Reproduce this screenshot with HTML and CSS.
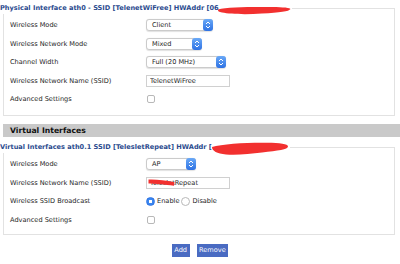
FILE: index.html
```html
<!DOCTYPE html>
<html>
<head>
<meta charset="utf-8">
<link rel="stylesheet" href="styles.css">
</head>
<body>
<fieldset class="group">
  <legend class="group-title">Physical Interface ath0 - SSID [TelenetWiFree] HWAddr [06<svg class="redact redact-a" width="72" height="6" viewBox="0 0 72 6"><path d="M0 4.5 C 8 2.2, 30 2, 50 2.1 C 62 2.2, 70 2.4, 72.5 4 C 71 6.5, 62 7.6, 44 8.6 C 28 9.6, 12 9.2, 4 7.6 C 1 7, -0.5 6, 0 4.5 Z"/></svg></legend>
  <div class="row">
    <span class="label">Wireless Mode</span>
    <div class="select w-client"><span class="select-value">Client</span><span class="stepper"><svg width="10" height="12" viewBox="0 0 10 12"><path d="M3 5 L5 3 L7 5 M3 7 L5 9 L7 7"/></svg></span></div>
  </div>
  <div class="row">
    <span class="label">Wireless Network Mode</span>
    <div class="select w-mixed"><span class="select-value">Mixed</span><span class="stepper"><svg width="10" height="12" viewBox="0 0 10 12"><path d="M3 5 L5 3 L7 5 M3 7 L5 9 L7 7"/></svg></span></div>
  </div>
  <div class="row">
    <span class="label">Channel Width</span>
    <div class="select w-channel"><span class="select-value">Full (20 MHz)</span><span class="stepper"><svg width="10" height="12" viewBox="0 0 10 12"><path d="M3 5 L5 3 L7 5 M3 7 L5 9 L7 7"/></svg></span></div>
  </div>
  <div class="row">
    <span class="label">Wireless Network Name (SSID)</span>
    <input class="text-input" type="text" value="TelenetWiFree">
  </div>
  <div class="row">
    <span class="label">Advanced Settings</span>
    <input class="checkbox" type="checkbox">
  </div>
</fieldset>

<div class="section-bar">Virtual Interfaces</div>

<fieldset class="group group-virtual">
  <legend class="group-title">Virtual Interfaces ath0.1 SSID [TelesletRepeat] HWAddr [<svg class="redact redact-b" width="76" height="6" viewBox="0 0 76 6"><path d="M0 3 C 10 0, 35 -1.5, 55 -1.2 C 68 -1, 76 0, 76 2.5 C 76 5.5, 66 6.5, 50 8.5 C 38 10, 24 11.5, 14 10.5 C 5 9.5, 0 7, 0 3 Z"/></svg></legend>
  <div class="row">
    <span class="label">Wireless Mode</span>
    <div class="select w-ap"><span class="select-value">AP</span><span class="stepper"><svg width="10" height="12" viewBox="0 0 10 12"><path d="M3 5 L5 3 L7 5 M3 7 L5 9 L7 7"/></svg></span></div>
  </div>
  <div class="row">
    <span class="label">Wireless Network Name (SSID)</span>
    <span class="input-wrap">
      <input class="text-input" type="text" value="TelesletRepeat">
      <svg class="redact-input" width="27" height="7" viewBox="0 0 27 7"><path d="M0.5 0.6 C 7 0.2, 17 1.2, 26.5 3.2 L 26 6.8 C 17 5.6, 7 4.8, 0.5 4.6 Z"/></svg>
    </span>
  </div>
  <div class="row">
    <span class="label">Wireless SSID Broadcast</span>
    <input class="radio" type="radio" name="bc" checked><span class="radio-label">Enable</span>
    <input class="radio" type="radio" name="bc"><span class="radio-label">Disable</span>
  </div>
  <div class="row">
    <span class="label">Advanced Settings</span>
    <input class="checkbox" type="checkbox">
  </div>
</fieldset>

<div class="actions">
  <button class="btn" type="button">Add</button>
  <button class="btn" type="button">Remove</button>
</div>
</body>
</html>
```

FILE: styles.css
```css
* { box-sizing: border-box; }

html, body {
  margin: 0;
  background: #fff;
}

body {
  width: 400px;
  height: 264px;
  overflow: hidden;
  font-family: "DejaVu Sans", sans-serif;
  font-size: 6.6px;
  color: #1e1e1e;
}

.group {
  margin: 2px 5px 0 3px;
  padding: 2px 0 6px 0;
  border: 1px solid #e2e2e2;
  min-width: 0;
}

.group-virtual {
  margin-top: 4px;
  padding-bottom: 5px;
}

.group-title {
  margin-left: -4px;
  padding: 0 2px 0 0;
  font-weight: bold;
  color: #2b4b8e;
  line-height: 12px;
  white-space: nowrap;
}

.redact {
  overflow: visible;
  vertical-align: middle;
}

.redact path,
.redact-input path {
  fill: #f2302f;
}

.redact-a { margin-left: -1px; }

.row {
  display: flex;
  align-items: center;
  height: 18.5px;
  padding-left: 6px;
}

.label {
  width: 136px;
  flex: none;
}

.select {
  display: flex;
  height: 12px;
  border: 1px solid #cbcbcb;
  border-radius: 3px;
  background: #fff;
  box-shadow: 0 0.5px 1px rgba(0, 0, 0, 0.12);
}

.select-value {
  flex: 1;
  padding-left: 5px;
  line-height: 10px;
}

.stepper {
  flex: none;
  width: 10px;
  margin: -1px -1px -1px 0;
  border-radius: 3px;
  background: linear-gradient(#6aa9f7, #2e72e4);
  display: flex;
}

.stepper path {
  fill: none;
  stroke: #fff;
  stroke-width: 1;
}

.w-client { width: 67px; }
.w-mixed { width: 56px; }
.w-channel { width: 80px; }
.w-ap { width: 50px; }

.input-wrap {
  position: relative;
  display: flex;
}

.text-input {
  width: 84px;
  height: 12px;
  margin: 0;
  padding: 0 3px;
  border: 1px solid #d0d0d0;
  border-radius: 0;
  font: inherit;
  color: #1e1e1e;
  background: #fff;
  outline: none;
}

.redact-input {
  position: absolute;
  left: 2px;
  top: 2.5px;
  overflow: visible;
}

.checkbox {
  appearance: none;
  width: 8px;
  height: 8px;
  margin: 0 0 0 1px;
  border: 1px solid #b8b8b8;
  border-radius: 2px;
  background: #fff;
}

.radio {
  appearance: none;
  width: 9px;
  height: 9px;
  margin: 0;
  border: 1px solid #b8b8b8;
  border-radius: 50%;
  background: #fff;
}

.radio:checked {
  border-color: #2f74e4;
  background: radial-gradient(circle, #fff 0 1.4px, #3a86f0 1.9px);
}

.radio-label {
  margin: 0 2px 0 2px;
}

.section-bar {
  margin: 8px 0 0 3px;
  height: 13.5px;
  padding-left: 7px;
  background: #c9c9c9;
  font-weight: bold;
  font-size: 7.7px;
  line-height: 13.5px;
  color: #111;
}

.actions {
  display: flex;
  justify-content: center;
  gap: 7px;
  margin-top: 9px;
}

.btn {
  height: 12.5px;
  margin: 0;
  padding: 0 2.5px;
  border: 0;
  background: #4a6bc2;
  color: #fff;
  font: inherit;
  line-height: 12.5px;
}
```
